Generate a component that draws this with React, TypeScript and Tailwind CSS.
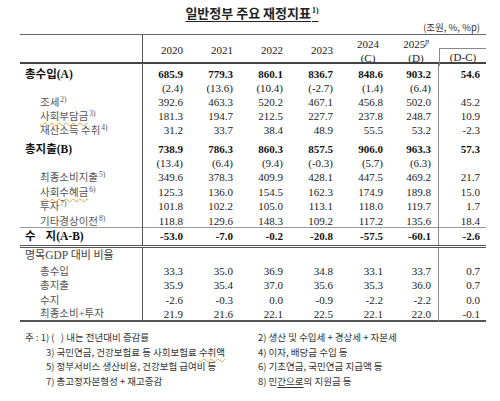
import React from "react";

const COLS = "grid grid-cols-[123px_50px_50px_50px_50px_50px_46px_47px]";
const KR = "[font-family:'Noto_Sans_CJK_KR',sans-serif]";
const SERIF = "[font-family:'Liberation_Serif',serif]";

function Sup({ children }: { children: React.ReactNode }) {
  return (
    <sup className="[font-family:'Liberation_Serif',serif] text-[7.5px] relative top-[-4px] ml-[1px]">{children}</sup>
  );
}

type RowProps = {
  label: React.ReactNode;
  vals: string[];
  dc?: string;
  bold?: boolean;
  h: string;
  pt?: string;
  rowCls?: string;
};

function Row({ label, vals, dc = "", bold = false, h, pt = "", rowCls = "" }: RowProps) {
  const num = `[font-family:'Liberation_Serif',serif] text-[11px] ${bold ? "font-bold text-[#111]" : "text-[#222]"} ${pt} flex items-center justify-end`;
  return (
    <div className={`${COLS} ${h} ${rowCls}`}>
      <div className={`border-r border-[#555] ${pt} flex items-center`}>{label}</div>
      {vals.slice(0, 5).map((v, i) => (
        <div key={i} className={`${num} pr-[10px]`}>
          {v}
        </div>
      ))}
      <div className={`${num} pr-[7px] border-r border-[#888]`}>{vals[5]}</div>
      <div className={`${num} pr-[6px]`}>{dc}</div>
    </div>
  );
}

function BoldLabel({ children }: { children: React.ReactNode }) {
  return (
    <span className="[font-family:'Noto_Sans_CJK_KR',sans-serif] pl-[5px] text-[11.5px] font-bold text-[#111] leading-none">
      {children}
    </span>
  );
}

function SubLabel({ children, sup }: { children: React.ReactNode; sup?: string }) {
  return (
    <span className="[font-family:'Noto_Sans_CJK_KR',sans-serif] pl-[20px] text-[10.5px] text-[#555] leading-none">
      {children}
      {sup ? <Sup>{sup}</Sup> : null}
    </span>
  );
}

function Wavy({ children }: { children: React.ReactNode }) {
  return (
    <span className="underline decoration-wavy decoration-[#e8a040] decoration-[1px] underline-offset-2">
      {children}
    </span>
  );
}

export default function App() {
  return (
    <div className="w-[500px] h-[401px] bg-white overflow-hidden">
      {/* Title */}
      <div className="h-[22px] pt-[4px] flex justify-center">
        <span className={`${KR} text-[13px] font-bold text-[#222] leading-[17px] underline underline-offset-[3px] decoration-[1px] pl-[4px]`}>
          일반정부 주요 재정지표<sup className="[font-family:'Liberation_Serif',serif] text-[8px] relative top-[-5px] ml-[1px]">1)</sup>
        </span>
      </div>
      <div className="h-[12px] flex justify-end pr-[20px]">
        <span className={`${KR} text-[9.5px] text-[#333] leading-[10px]`}>(조원, %, %p)</span>
      </div>

      {/* Table */}
      <div className="ml-[20px] w-[466px] border-t border-[#666]">
        {/* Header */}
        <div className={`${COLS} h-[29px] border-b-2 border-[#444]`}>
          <div className="border-r border-[#555]" />
          {["2020", "2021", "2022", "2023"].map((y) => (
            <div key={y} className={`${SERIF} text-[11px] text-[#222] flex items-center justify-end pr-[10px]`}>
              {y}
            </div>
          ))}
          <div className={`${SERIF} text-[11px] text-[#222] flex flex-col items-center justify-center leading-[14px] pt-[1px]`}>
            <span>2024</span>
            <span>(C)</span>
          </div>
          <div className={`${SERIF} text-[11px] text-[#222] flex flex-col items-center justify-center leading-[14px] pt-[1px]`}>
            <span>
              2025<sup className="text-[7.5px] italic relative top-[-4px]">p</sup>
            </span>
            <span>(D)</span>
          </div>
          <div className="flex flex-col">
            <div className="h-[13px]" />
            <div className={`${SERIF} text-[11px] text-[#222] flex-1 border-t border-l border-[#888] flex items-center justify-center`}>
              (D-C)
            </div>
          </div>
        </div>

        {/* Revenue */}
        <Row
          h="h-[16px]"
          pt="pt-[2px]"
          bold
          label={
            <BoldLabel>
              총수입<span className={SERIF}>(A)</span>
            </BoldLabel>
          }
          vals={["685.9", "779.3", "860.1", "836.7", "848.6", "903.2"]}
          dc="54.6"
        />
        <Row h="h-[14px]" label={null} vals={["(2.4)", "(13.6)", "(10.4)", "(-2.7)", "(1.4)", "(6.4)"]} />
        <Row h="h-[14px]" label={<SubLabel sup="2)">조세</SubLabel>} vals={["392.6", "463.3", "520.2", "467.1", "456.8", "502.0"]} dc="45.2" />
        <Row
          h="h-[14px]"
          label={
            <SubLabel sup="3)">
              <Wavy>사회부담금</Wavy>
            </SubLabel>
          }
          vals={["181.3", "194.7", "212.5", "227.7", "237.8", "248.7"]}
          dc="10.9"
        />
        <Row h="h-[14px]" label={<SubLabel sup="4)">재산소득 수취</SubLabel>} vals={["31.2", "33.7", "38.4", "48.9", "55.5", "53.2"]} dc="-2.3" />

        {/* Expenditure */}
        <Row
          h="h-[19px]"
          pt="pt-[5px]"
          bold
          label={
            <BoldLabel>
              총지출<span className={SERIF}>(B)</span>
            </BoldLabel>
          }
          vals={["738.9", "786.3", "860.3", "857.5", "906.0", "963.3"]}
          dc="57.3"
        />
        <Row h="h-[14.4px]" label={null} vals={["(13.4)", "(6.4)", "(9.4)", "(-0.3)", "(5.7)", "(6.3)"]} />
        <Row h="h-[14.4px]" label={<SubLabel sup="5)">최종소비지출</SubLabel>} vals={["349.6", "378.3", "409.9", "428.1", "447.5", "469.2"]} dc="21.7" />
        <Row
          h="h-[14.4px]"
          label={
            <SubLabel sup="6)">
              <Wavy>사회수혜금</Wavy>
            </SubLabel>
          }
          vals={["125.3", "136.0", "154.5", "162.3", "174.9", "189.8"]}
          dc="15.0"
        />
        <Row h="h-[14.4px]" label={<SubLabel sup="7)">투자</SubLabel>} vals={["101.8", "102.2", "105.0", "113.1", "118.0", "119.7"]} dc="1.7" />
        <Row h="h-[14.4px]" label={<SubLabel sup="8)">기타경상이전</SubLabel>} vals={["118.8", "129.6", "148.3", "109.2", "117.2", "135.6"]} dc="18.4" />

        {/* Balance */}
        <Row
          h="h-[21px]"
          rowCls="border-t border-b-[3px] border-t-[#999] border-b-[#555] border-double"
          bold
          label={
            <BoldLabel>
              수<span className="ml-[10px]">지</span>
              <span className={SERIF}>(A-B)</span>
            </BoldLabel>
          }
          vals={["-53.0", "-7.0", "-0.2", "-20.8", "-57.5", "-60.1"]}
          dc="-2.6"
        />

        {/* GDP ratio */}
        <div className="border-b-2 border-[#555]">
          <Row
            h="h-[15px]"
            label={
              <span className="[font-family:'Noto_Sans_CJK_KR',sans-serif] pl-[5px] text-[11px] text-[#444] leading-none">
                명목<span className="[font-family:'Liberation_Serif',serif] text-[11.5px]">GDP</span> 대비 비율
              </span>
            }
            vals={["", "", "", "", "", ""]}
          />
          <Row h="h-[14.3px]" label={<SubLabel>총수입</SubLabel>} vals={["33.3", "35.0", "36.9", "34.8", "33.1", "33.7"]} dc="0.7" />
          <Row h="h-[14.3px]" label={<SubLabel>총지출</SubLabel>} vals={["35.9", "35.4", "37.0", "35.6", "35.3", "36.0"]} dc="0.7" />
          <Row h="h-[14.3px]" label={<SubLabel>수지</SubLabel>} vals={["-2.6", "-0.3", "0.0", "-0.9", "-2.2", "-2.2"]} dc="0.0" />
          <Row
            h="h-[14.3px]"
            label={
              <SubLabel>
                최종소비<span className="[font-family:'Liberation_Serif',serif]">+</span>투자
              </SubLabel>
            }
            vals={["21.9", "21.6", "22.1", "22.5", "22.1", "22.0"]}
            dc="-0.1"
          />
        </div>
      </div>

      {/* Footnotes */}
      <div className={`${KR} text-[9.5px] text-[#333] leading-[14.5px] pl-[25px] pt-[8px] flex`}>
        <div className="w-[233px] flex flex-col">
          <span>주 : 1) (&nbsp;&nbsp;&nbsp;) 내는 전년대비 증감률</span>
          <span className="pl-[21px]">
            3) 국민연금, 건강보험료 등 사회보험료 <Wavy>수취액</Wavy>
          </span>
          <span className="pl-[21px]">5) 정부서비스 생산비용, 건강보험 급여비 등</span>
          <span className="pl-[21px]">7) 총고정자본형성 + 재고증감</span>
        </div>
        <div className="flex flex-col">
          <span>2) 생산 및 수입세 + 경상세 + 자본세</span>
          <span>4) 이자, 배당금 수입 등</span>
          <span>6) 기초연금, 국민연금 지급액 등</span>
          <span>
            8) 민<span className="underline underline-offset-2">간으로</span>의 지원금 등
          </span>
        </div>
      </div>
    </div>
  );
}
